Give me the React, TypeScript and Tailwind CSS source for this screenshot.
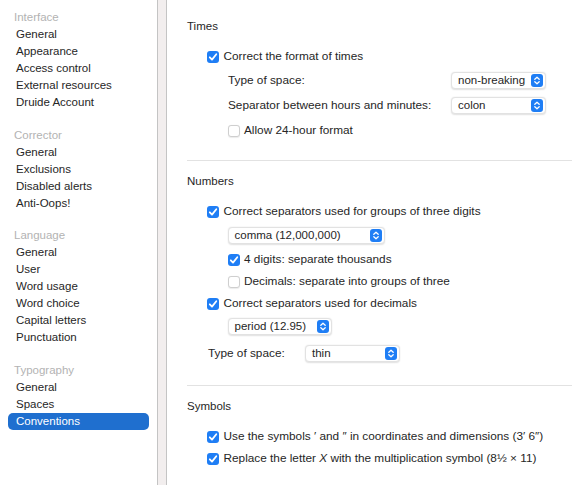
import React from "react";

const font = { fontFamily: '"Liberation Sans", Arial, sans-serif' };

type Group = { title: string; items: string[] };

const groups: Group[] = [
  { title: "Interface", items: ["General", "Appearance", "Access control", "External resources", "Druide Account"] },
  { title: "Corrector", items: ["General", "Exclusions", "Disabled alerts", "Anti-Oops!"] },
  { title: "Language", items: ["General", "User", "Word usage", "Word choice", "Capital letters", "Punctuation"] },
  { title: "Typography", items: ["General", "Spaces", "Conventions"] },
];

function Checkbox({ checked }: { checked: boolean }) {
  if (!checked) {
    return <span className="block h-[12px] w-[12px] shrink-0 rounded-[3px] border border-[#cfcfcf] bg-white shadow-[0_0.5px_1px_rgba(0,0,0,0.08)]" />;
  }
  return (
    <span className="flex h-[12px] w-[12px] shrink-0 items-center justify-center rounded-[3px] bg-[#1f7ef5]">
      <svg width="12" height="12" viewBox="0 0 12 12">
        <path d="M2.8 6.3 L5 8.6 L9.3 3.3" fill="none" stroke="white" strokeWidth="1.8" strokeLinecap="round" strokeLinejoin="round" />
      </svg>
    </span>
  );
}

function Check({ checked, children, className = "" }: { checked: boolean; children: React.ReactNode; className?: string }) {
  return (
    <div className={`flex h-[17px] items-center gap-[4.5px] ${className}`}>
      <Checkbox checked={checked} />
      <span className="whitespace-nowrap leading-[17px]">{children}</span>
    </div>
  );
}

function Select({ value, width }: { value: string; width: string }) {
  return (
    <div className={`flex h-[17px] ${width} items-center justify-between rounded-[4px] border border-[#e2e2e2] bg-white pl-[6px] pr-[2px] text-[11.5px] shadow-[0_0.5px_1.5px_rgba(0,0,0,0.12)]`}>
      <span className="whitespace-nowrap leading-[15px]">{value}</span>
      <span className="flex h-[13px] w-[12px] items-center justify-center rounded-[3px] bg-[#1f7ef5]">
        <svg width="12" height="13" viewBox="0 0 12 13">
          <path d="M3.8 5.2 L6 3.2 L8.2 5.2" fill="none" stroke="white" strokeWidth="1.3" strokeLinecap="round" strokeLinejoin="round" />
          <path d="M3.8 7.8 L6 9.8 L8.2 7.8" fill="none" stroke="white" strokeWidth="1.3" strokeLinecap="round" strokeLinejoin="round" />
        </svg>
      </span>
    </div>
  );
}

function Sidebar() {
  return (
    <div className="w-[157px] shrink-0 bg-white pt-[8px] text-[11.5px]">
      {groups.map((g, gi) => (
        <div key={g.title} className={gi > 0 ? "mt-[14.5px]" : ""}>
          <div className="h-[18px] pl-[14px] leading-[18px] text-[#b3b3b3]">{g.title}</div>
          {g.items.map((item) =>
            item === "Conventions" ? (
              <div key={item} className="mx-[8px] h-[17px] rounded-[5px] bg-[#1f6fcf] px-[8px] leading-[17px] text-white">
                {item}
              </div>
            ) : (
              <div key={g.title + item} className="h-[17px] pl-[16px] leading-[17px]">
                {item}
              </div>
            )
          )}
        </div>
      ))}
    </div>
  );
}

export default function App() {
  return (
    <div className="flex h-[485px] w-[572px] overflow-hidden bg-white text-[#262626]" style={font}>
      <Sidebar />
      <div className="w-[10px] shrink-0 border-x border-[#c4c4c4] bg-[#f2eeee]" />
      <div className="flex-1 pl-[20px] text-[11.8px]">
        {/* Times */}
        <div className="mt-[18px] h-[17px] text-[11.5px] leading-[17px]">Times</div>
        <div className="pl-[20px]">
          <Check checked className="mt-[13px]">Correct the format of times</Check>
          <div className="mt-[7px] flex h-[17px] items-center pl-[21px]">
            <span className="w-[223px]">Type of space:</span>
            <Select value="non-breaking" width="w-[95px]" />
          </div>
          <div className="mt-[8px] flex h-[17px] items-center pl-[21px]">
            <span className="w-[223px]">Separator between hours and minutes:</span>
            <Select value="colon" width="w-[95px]" />
          </div>
          <Check checked={false} className="mt-[8px] pl-[20.5px]">Allow 24-hour format</Check>
        </div>
        <div className="mt-[21px] h-px bg-[#e2e2e2]" />

        {/* Numbers */}
        <div className="mt-[12px] h-[17px] text-[11.5px] leading-[17px]">Numbers</div>
        <div className="pl-[20px]">
          <Check checked className="mt-[13px]">Correct separators used for groups of three digits</Check>
          <div className="mt-[7px] pl-[20.5px]">
            <Select value="comma (12,000,000)" width="w-[157px]" />
          </div>
          <Check checked className="mt-[7px] pl-[20.5px]">4 digits: separate thousands</Check>
          <Check checked={false} className="mt-[5px] pl-[20.5px]">Decimals: separate into groups of three</Check>
          <Check checked className="mt-[5px]">Correct separators used for decimals</Check>
          <div className="mt-[6px] pl-[20.5px]">
            <Select value="period (12.95)" width="w-[104px]" />
          </div>
          <div className="mt-[10px] flex h-[17px] items-center pl-[1px]">
            <span className="w-[97px]">Type of space:</span>
            <Select value="thin" width="w-[95px]" />
          </div>
        </div>
        <div className="mt-[23px] h-px bg-[#e2e2e2]" />

        {/* Symbols */}
        <div className="mt-[12px] h-[17px] text-[11.5px] leading-[17px]">Symbols</div>
        <div className="pl-[20px]">
          <Check checked className="mt-[13px]">Use the symbols ′ and ″ in coordinates and dimensions (3′ 6″)</Check>
          <Check checked className="mt-[5px]">
            Replace the letter <i>X</i> with the multiplication symbol (8½ × 11)
          </Check>
        </div>
      </div>
    </div>
  );
}
